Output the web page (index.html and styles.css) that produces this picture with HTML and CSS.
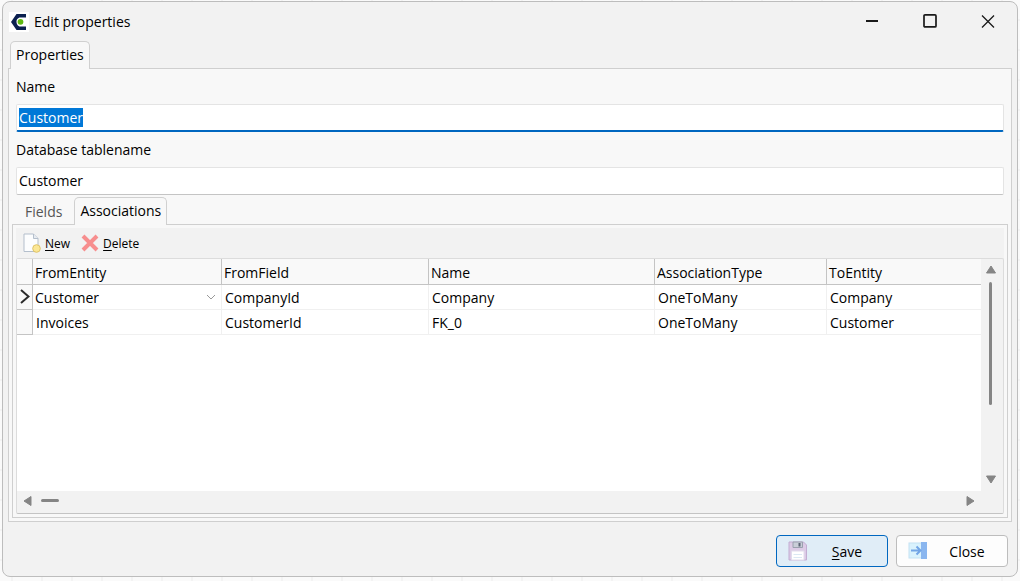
FILE: index.html
```
<!DOCTYPE html>
<html lang="en">
<head>
  <meta charset="UTF-8">
  <meta name="viewport" content="width=device-width, initial-scale=1">
  <title>Edit properties</title>
  <link rel="stylesheet" href="styles.css">
</head>
<body>
  <div class="window">
    <header class="titlebar">
      <svg class="app-icon" width="20" height="20" viewBox="0 0 20 20">
        <rect width="20" height="20" fill="#fff"/>
        <path d="M7.500 2H17v3.500h-5.500C8.500 5.500 7.500 8 7.500 9.700s1 4.800 4 4.800H17V18H7.500L2 10z" fill="#0b2050"/>
        <circle cx="11.500" cy="9.800" r="2.900" fill="#5fb912"/>
      </svg>
      <h1>Edit properties</h1>
      <div class="window-buttons">
        <button type="button" aria-label="Minimize">
          <svg width="16" height="16" viewBox="0 0 16 16"><path d="M2 7h12" stroke="#1a1a1a" stroke-width="2"/></svg>
        </button>
        <button type="button" aria-label="Maximize">
          <svg width="16" height="16" viewBox="0 0 16 16"><rect x="2" y="0.900" width="12" height="12" rx="1" fill="none" stroke="#1a1a1a" stroke-width="1.700"/></svg>
        </button>
        <button type="button" aria-label="Close window">
          <svg width="16" height="16" viewBox="0 0 16 16"><path d="M2 1.500l12 12M14 1.500L2 13.500" stroke="#1a1a1a" stroke-width="1.300"/></svg>
        </button>
      </div>
    </header>

    <div class="tabs tabs-main">
      <button type="button" class="tab active">Properties</button>
    </div>

    <form class="panel panel-main" id="propertiesForm">
      <label for="name">Name</label>
      <input id="name" name="name" type="text" value="Customer" autocomplete="off" spellcheck="false" autofocus>
      <label for="tablename">Database tablename</label>
      <input id="tablename" name="tablename" type="text" value="Customer" autocomplete="off" spellcheck="false">

      <div class="tabs tabs-inner">
        <button type="button" class="tab">Fields</button>
        <button type="button" class="tab active">Associations</button>
      </div>

      <div class="panel panel-inner">
        <div class="toolbar">
          <button type="button" class="tool">
            <svg width="18" height="20" viewBox="0 0 18 20">
              <path d="M1 1h9.500L15 5.500V18.500H1z" fill="#fcfdfe" stroke="#b4bfcc"/>
              <path d="M10.500 1v4.500H15" fill="#e6ebf1" stroke="#b4bfcc"/>
              <circle cx="13.500" cy="15.500" r="3.800" fill="#fbe795" stroke="#dfc367"/>
            </svg>
            <span><u>N</u>ew</span>
          </button>
          <button type="button" class="tool">
            <svg width="18" height="18" viewBox="0 0 18 18"><path d="M2 2l14 14M16 2L2 16" stroke="#f78e8e" stroke-width="4"/></svg>
            <span><u>D</u>elete</span>
          </button>
        </div>

        <div class="grid">
          <div class="grid-view">
            <table>
              <colgroup>
                <col class="col-marker">
                <col class="col-from">
                <col class="col-field">
                <col class="col-name">
                <col class="col-type">
                <col>
              </colgroup>
              <thead>
                <tr>
                  <th></th>
                  <th>FromEntity</th>
                  <th>FromField</th>
                  <th>Name</th>
                  <th>AssociationType</th>
                  <th>ToEntity</th>
                </tr>
              </thead>
              <tbody>
                <tr>
                  <td class="marker"><svg width="12" height="16" viewBox="0 0 12 16"><path d="M3 1l7.500 6.500L3 14" fill="none" stroke="#2b2b2b" stroke-width="2"/></svg></td>
                  <td class="editing">
                    <select aria-label="FromEntity">
                      <option>Customer</option>
                      <option>Invoices</option>
                    </select>
                    <svg class="chevron" width="10" height="6" viewBox="0 0 10 6"><path d="M1 1l4 4 4-4" fill="none" stroke="#999"/></svg>
                  </td>
                  <td>CompanyId</td>
                  <td>Company</td>
                  <td>OneToMany</td>
                  <td>Company</td>
                </tr>
                <tr>
                  <td class="marker"></td>
                  <td>Invoices</td>
                  <td>CustomerId</td>
                  <td>FK_0</td>
                  <td>OneToMany</td>
                  <td>Customer</td>
                </tr>
              </tbody>
            </table>
          </div>
          <div class="scroll-v">
            <svg width="12" height="10" viewBox="0 0 12 10"><path d="M6 1l4.500 7h-9z" fill="#858585" stroke="#858585" stroke-linejoin="round"/></svg>
            <div class="thumb"></div>
            <svg class="end" width="12" height="10" viewBox="0 0 12 10"><path d="M6 9l4.500-7h-9z" fill="#858585" stroke="#858585" stroke-linejoin="round"/></svg>
          </div>
          <div class="scroll-h">
            <svg width="10" height="12" viewBox="0 0 10 12"><path d="M1 6l7-4.500v9z" fill="#858585" stroke="#858585" stroke-linejoin="round"/></svg>
            <div class="thumb"></div>
            <svg class="end" width="10" height="12" viewBox="0 0 10 12"><path d="M9 6L2 1.500v9z" fill="#858585" stroke="#858585" stroke-linejoin="round"/></svg>
          </div>
        </div>
      </div>
    </form>

    <footer class="actions">
      <button type="submit" form="propertiesForm" class="btn btn-primary">
        <svg width="20" height="20" viewBox="0 0 20 20">
          <path d="M1 1h14.500L18.500 4v15H1z" fill="#dccbe6" stroke="#c3add2"/>
          <path d="M5 1h9.500v5.500H5z" fill="#c9ced8" stroke="#9aa0ae"/>
          <path d="M10.500 2h2v3.500h-2z" fill="#5d6577"/>
          <path d="M3.500 10h12.500v9H3.500z" fill="#fff" stroke="#e1dcec"/>
          <path d="M5.500 13.500h8.500M5.500 16.500h8.500" stroke="#dbe8f3"/>
        </svg>
        <span><u>S</u>ave</span>
      </button>
      <button type="button" class="btn">
        <svg width="20" height="18" viewBox="0 0 20 18">
          <rect x="1" y="1" width="14" height="15" fill="#d9f2fd" stroke="#c3e2f3"/>
          <rect x="13" width="6" height="17" fill="#8ab6ef"/>
          <path d="M3 8.500h9M8.500 4.500l4 4-4 4" fill="none" stroke="#72a5e6" stroke-width="2"/>
        </svg>
        <span>Close</span>
      </button>
    </footer>
  </div>

  <script>
    document.getElementById('propertiesForm').addEventListener('submit', function(e) {
      e.preventDefault();
    });

    // Start with the name ready to be overwritten
    const nameInput = document.getElementById('name');
    nameInput.focus();
    nameInput.select();
  </script>
</body>
</html>
```
FILE: styles.css
```
* {
  box-sizing: border-box;
}
body {
  margin: 0;
  height: 100vh;
  padding: 1px 2px 4px;
  display: flex;
  font-family: "Open Sans", "Noto Sans", sans-serif;
  font-size: 14px;
  line-height: 20px;
  color: #000;
  background-color: #fafafa;
  background-image:
    linear-gradient(90deg, #f3f3f3 2px, transparent 2px),
    linear-gradient(#f3f3f3 2px, transparent 2px);
  background-size: 30px 30px;
  background-position: 11px 19px;
}
button, input, select {
  font: inherit;
  color: inherit;
}
button {
  padding: 0;
  border: none;
  background: none;
}
svg {
  display: block;
  flex: none;
}
u {
  text-underline-offset: 2px;
}

/* Window frame */
.window {
  flex: 1;
  min-width: 0;
  display: flex;
  flex-direction: column;
  padding: 0 5px;
  border: 1px solid #bdbdbd;
  border-radius: 8px;
  background: #f2f2f2;
}
.titlebar {
  display: flex;
  align-items: center;
  height: 39px;
  padding-left: 1px;
}
.titlebar h1 {
  margin: 0 0 0 5px;
  font-size: 14px;
  font-weight: normal;
}
.window-buttons {
  display: flex;
  margin: 0 -5px 0 auto;
}
.window-buttons button {
  display: flex;
  align-items: center;
  justify-content: center;
  width: 58px;
  height: 32px;
}

/* Tabs and panels */
.tabs {
  display: flex;
  position: relative;
  z-index: 1;
  margin-bottom: -1px;
}
.tabs-main {
  padding-left: 2px;
}
.tabs-inner {
  margin-top: 2px;
}
.tab {
  height: 28px;
  padding: 0 5px 2px;
  border: 1px solid transparent;
  border-bottom: none;
  color: #555;
}
.tabs-inner .tab:first-child {
  padding: 0 11px 0 12px;
}
.tab.active {
  border-color: #d0d0d0;
  border-radius: 5px 5px 0 0;
  background: #f8f8f8;
  color: #000;
}
.panel {
  display: flex;
  flex-direction: column;
  border: 1px solid #cfcfcf;
  background: #f8f8f8;
}
.panel-main {
  flex: 1;
  min-height: 0;
  padding: 0 3px 3px;
}
.panel-main > label {
  padding: 8px 4px 7px;
}
.panel-main > input {
  height: 28px;
  margin: 0 4px;
  padding: 0 2px 1px;
  border: 1px solid #e4e4e4;
  border-bottom-color: #c4c4c4;
  border-radius: 2px;
  background: #fff;
  outline: none;
}
.panel-main > input:focus {
  border-bottom: 2px solid #0067c0;
}
.panel-main > input::selection {
  background: #0078d7;
  color: #fff;
}
.panel-inner {
  flex: 1;
  min-height: 0;
  padding: 3px;
}

/* Toolbar */
.toolbar {
  display: flex;
  align-items: center;
  gap: 11px;
  height: 30px;
  padding-left: 7px;
  background: #f2f2f2;
  font-size: 12px;
}
.tool {
  display: flex;
  align-items: center;
  gap: 4px;
}
.tool span {
  padding-top: 2px;
}

/* Associations grid */
.grid {
  flex: 1;
  min-height: 0;
  display: grid;
  grid-template-columns: minmax(0, 1fr) 22px;
  grid-template-rows: minmax(0, 1fr) 22px;
  border: 1px solid #dcdcdc;
  border-bottom-color: #c4c4c4;
  border-radius: 2px;
  background: #f2f2f2;
}
.grid-view {
  overflow: hidden;
  background: #fff;
}
table {
  width: 100%;
  table-layout: fixed;
  border-collapse: separate;
  border-spacing: 0;
}
.col-marker { width: 16px; }
.col-from { width: 189px; }
.col-field { width: 207px; }
.col-name { width: 226px; }
.col-type { width: 172px; }
th, td {
  height: 25px;
  padding: 2px 3px 0;
  border-right: 1px solid #f0f0f0;
  border-bottom: 1px solid #f0f0f0;
  font-weight: normal;
  text-align: left;
}
th {
  height: 26px;
  padding: 2px 2px 0;
  border-color: #c4c4c4;
  background: #f9f9f9;
}
th:last-child, td:last-child {
  border-right: none;
}
.marker {
  padding: 0 1px;
  border-color: #c4c4c4;
  background: #f9f9f9;
}
.editing {
  position: relative;
  padding: 0 2px;
}
.editing select {
  display: block;
  width: 100%;
  height: 24px;
  padding: 2px 0 0;
  border: none;
  background: none;
  appearance: none;
  outline: none;
}
.chevron {
  position: absolute;
  top: 9px;
  right: 5px;
  pointer-events: none;
}

/* Scroll bars */
.scroll-v, .scroll-h {
  display: flex;
  align-items: center;
}
.scroll-v {
  flex-direction: column;
  padding: 6px 3px 7px 0;
}
.scroll-h {
  padding: 0 6px 3px;
}
.thumb {
  border-radius: 2px;
  background: #858585;
}
.scroll-v .thumb {
  width: 3px;
  height: 56%;
  margin-top: 7px;
}
.scroll-h .thumb {
  width: 18px;
  height: 3px;
  margin-left: 8px;
}
.scroll-v .end {
  margin-top: auto;
}
.scroll-h .end {
  margin-left: auto;
}

/* Bottom buttons */
.actions {
  display: flex;
  justify-content: flex-end;
  gap: 8px;
  padding: 13px 4px 9px;
}
.btn {
  display: flex;
  align-items: center;
  width: 112px;
  height: 32px;
  padding: 0 11px;
  border: 1px solid #bdbdbd;
  border-radius: 4px;
  background: #fdfdfd;
}
.btn span {
  flex: 1;
  padding: 1px 0 0 10px;
  text-align: center;
}
.btn-primary {
  border-color: #0067c0;
  background: #e0edf7;
}
```
